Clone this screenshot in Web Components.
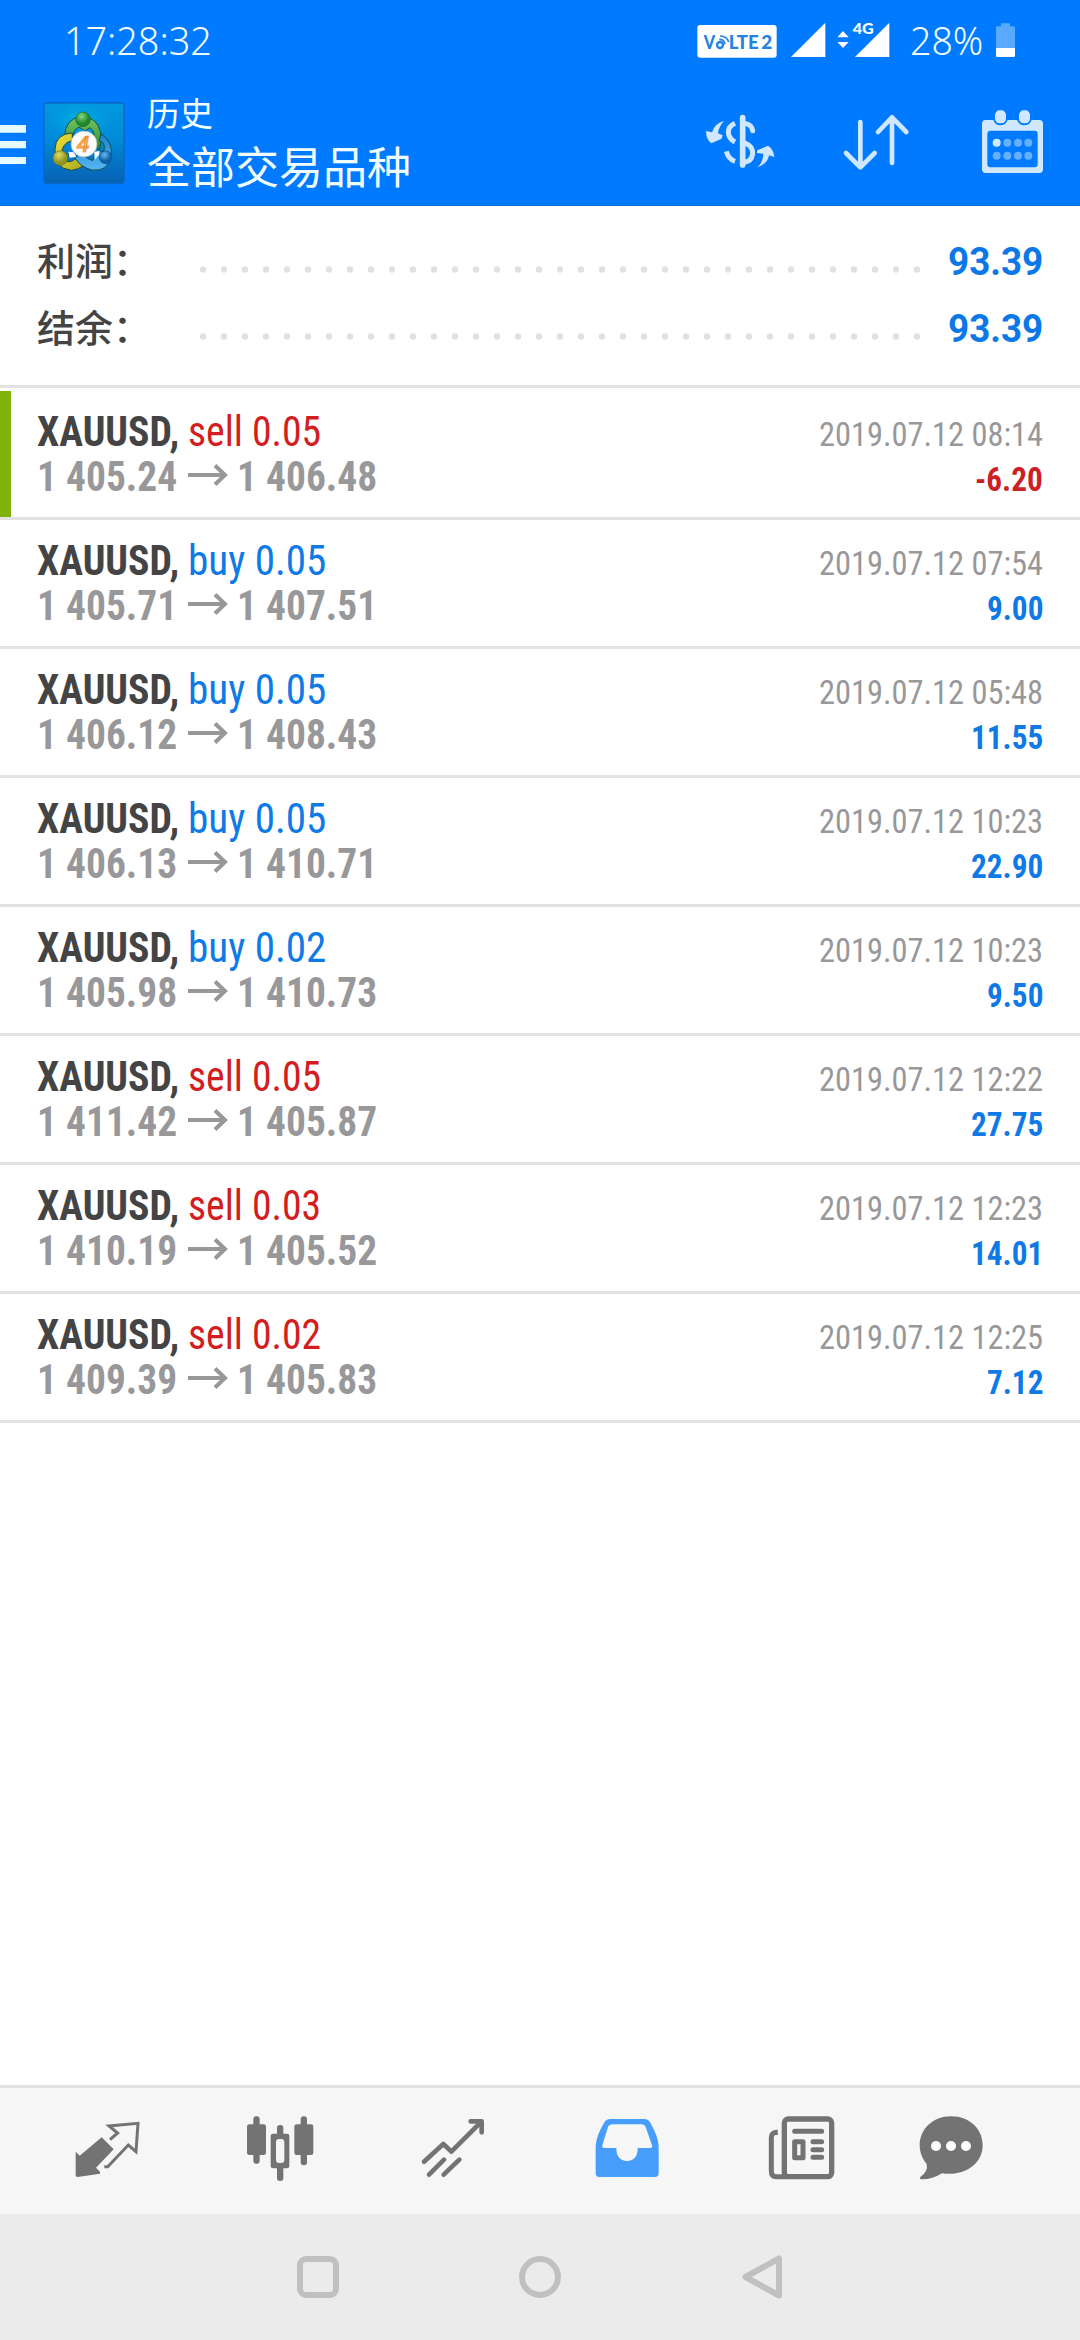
<!DOCTYPE html>
<html lang="zh-CN">
<head>
<meta charset="utf-8">
<title>历史</title>
<style>
html,body{margin:0;padding:0;background:#fff}
body{width:1080px;height:2340px;overflow:hidden;font-family:"Roboto","Noto Sans CJK SC",sans-serif}
</style>
</head>
<body>
<mt-app></mt-app>
<script>
/* Text squeezed horizontally so that the sample string takes a given width. */
class FitText extends HTMLElement{
  connectedCallback(){
    const r=this.attachShadow({mode:'open'});
    r.innerHTML=`<style>:host{display:block;white-space:nowrap;flex:none}span{display:inline-block;transform-origin:0 50%;white-space:pre}</style><span></span>`;
    const s=r.querySelector('span'),t=this.getAttribute('text');
    s.textContent=this.getAttribute('ref')||t;
    const k=parseFloat(this.getAttribute('w'))/s.offsetWidth;
    s.textContent=t;
    const w=s.getBoundingClientRect().width;
    s.style.transform=`scaleX(${k})`;
    this.style.width=w*k+'px';
  }
}
customElements.define('fit-text',FitText);

const define=(name,html)=>customElements.define(name,class extends HTMLElement{
  connectedCallback(){
    if(this.shadowRoot)return;
    this.attachShadow({mode:'open'}).innerHTML=typeof html==='function'?html(this):html;
  }
});

define('status-bar',`<style>
:host{display:flex;height:80px;box-sizing:border-box;padding:0 65px 0 64px;align-items:flex-start;color:#f2fcff;font-family:"Noto Sans","Open Sans",sans-serif;font-weight:350}
fit-text{font-size:38px;line-height:80px}
.sp{flex:1}svg{display:block;flex:none}
.b{margin-right:14px}.s{margin-right:19px}.p{margin-right:13px}
</style>
<fit-text text="17:28:32" w="148"></fit-text><div class="sp"></div>
<svg class="b" width="80" height="80" viewBox="54 0 240 240"><rect x="55" y="75" width="238" height="98" rx="9" fill="#fff"/>
<g fill="#2583df" font-family="Lato,sans-serif" font-weight="900" font-size="57"><text x="74" y="147" textLength="34" lengthAdjust="spacingAndGlyphs">V</text><text x="149" y="147" textLength="90" lengthAdjust="spacingAndGlyphs">LTE</text><text x="247" y="147" textLength="33" lengthAdjust="spacingAndGlyphs">2</text></g>
<g fill="none" stroke="#2583df"><circle cx="123" cy="135" r="9" stroke-width="7"/><path d="M121 118q15 0 17 15M123 108q22 1 26 18" stroke-width="5"/></g></svg>
<svg class="s" width="100" height="80" viewBox="336 0 300 240" fill="#fff"><path d="M336 171L439 68V171ZM528 171L631 68V171Z"/><path d="M475 112L492 93L509 112ZM475 126L492 144L509 126Z"/><path d="M516 62H588V103H516Z" fill="#007aff"/><text x="521" y="101" font-family="Lato" font-weight="900" font-size="45" textLength="63" lengthAdjust="spacingAndGlyphs">4G</text></svg>
<fit-text class="p" text="28%" w="73"></fit-text>
<svg width="19" height="80" viewBox="948 0 57 240"><path d="M952 79H963V70H990V79H1001Q1005 79 1005 83V145H948V83Q948 79 952 79Z" fill="#59a9ff"/><path d="M948 144H1005V167Q1005 171 1001 171H952Q948 171 948 167Z" fill="#fff"/></svg>`);

define('app-logo',`<style>:host{display:block;width:84px;height:84px}svg{display:block}</style>
<svg width="84" height="84" viewBox="127 61 252 252"><defs>
<linearGradient id="bg" x2="0" y2="1"><stop stop-color="#0298df"/><stop offset=".45" stop-color="#008bd9"/><stop offset="1" stop-color="#0861b3"/></linearGradient>
<radialGradient id="glow"><stop stop-color="#00b5e5"/><stop offset="1" stop-color="#00a0e0" stop-opacity="0"/></radialGradient>
<linearGradient id="g" x2="0" y2="1"><stop stop-color="#78c665"/><stop offset="1" stop-color="#238b31"/></linearGradient>
<linearGradient id="y" x2="1" y2="1"><stop stop-color="#f0df39"/><stop offset="1" stop-color="#a9aa20"/></linearGradient>
<linearGradient id="b" x2="0" y2="1"><stop stop-color="#1684cc"/><stop offset="1" stop-color="#57b7f3"/></linearGradient>
<radialGradient id="gb" cx=".4" cy=".3"><stop stop-color="#8bd87c"/><stop offset="1" stop-color="#20852f"/></radialGradient>
<radialGradient id="yb" cx=".4" cy=".3"><stop stop-color="#e2db67"/><stop offset="1" stop-color="#8f9720"/></radialGradient>
<radialGradient id="bb" cx=".4" cy=".3"><stop stop-color="#67baf0"/><stop offset="1" stop-color="#0b60a9"/></radialGradient></defs>
<rect x="130" y="64" width="246" height="247" rx="13" fill="#0868c8"/><rect x="135" y="69" width="236" height="237" rx="8" fill="url(#bg)"/><ellipse cx="240" cy="120" rx="100" ry="60" fill="url(#glow)"/>
<g stroke="#174c45" stroke-width="3">
<path d="M244 107Q195 116 195 168L218 180Q218 148 238 139L256 151L270 141Q292 154 278 188L299 208Q307 184 303 155Q294 112 249 107Z" fill="url(#g)"/>
<path d="M218 157Q168 159 166 205Q162 264 216 269Q237 267 254 253L243 229L225 236Q213 248 195 240L209 222Q188 220 188 206Q195 184 218 180Z" fill="url(#y)"/>
<path d="M304 159Q344 188 333 228Q325 274 276 268Q245 260 226 233L246 215Q262 236 279 240L290 216L313 211Q318 184 299 180Z" fill="url(#b)"/>
</g>
<path d="M206 213l16 2 8 14-20 2ZM284 213l16-2-3 13-12 13Z" fill="#fff"/>
<circle cx="250" cy="116" r="22" fill="url(#gb)" stroke="#136c2b" stroke-width="2"/><circle cx="182" cy="232" r="22" fill="url(#yb)" stroke="#6c7620" stroke-width="2"/><circle cx="318" cy="230" r="19" fill="url(#bb)" stroke="#07569b" stroke-width="2"/>
<circle cx="253" cy="190" r="39" fill="#fcfcfc" stroke="#aab4ba" stroke-width="2"/><text x="231" y="214" font-family="Roboto" font-weight="500" font-style="italic" font-size="66" textLength="38" lengthAdjust="spacingAndGlyphs" fill="#ffb35e" stroke="#e9861c" stroke-width="2">4</text>
</svg>`);

define('app-header',`<style>
:host{display:flex;height:126px;align-items:flex-start;color:#f1fcff;border-bottom:1px solid #0b6fd4;box-sizing:border-box}
svg{display:block;flex:none}app-logo{margin:21px 21px 0 16px;flex:none}
.t{flex:1;font-family:"Noto Sans CJK SC",sans-serif;padding-top:15px}
.a{font-size:33px;line-height:34px}.b{font-size:44px;line-height:46px;margin-top:13px;white-space:nowrap}
</style>
<svg width="26" height="120" viewBox="0 0 78 360" fill="#e6fbff"><path d="M0 135H78V158H0ZM0 183H78V205H0ZM0 231H78V252H0Z"/></svg>
<app-logo></app-logo>
<div class="t"><div class="a">历史</div><div class="b">全部交易品种</div></div>
<svg width="400" height="125" viewBox="0 240 1200 375" fill="none" stroke="#cfe7ff" stroke-linecap="round" stroke-linejoin="round">
<g stroke-width="15"><path d="M188 353V495" stroke-width="17"/><path d="M195 370Q216 374 218 392"/><path d="M195 429Q219 438 218 462Q214 484 195 486"/><path d="M165 370Q145 380 145 395Q145 415 165 426M165 484Q145 477 139 454" stroke-linecap="butt"/></g>
<path d="M132 363Q105 369 96 397L78 393Q78 419 94 430L125 416L128 406L114 400Q115 382 132 363ZM231 502Q249 489 250 461L230 459L232 451L264 437Q281 447 283 471L267 466Q264 491 231 502Z" fill="#cfe7ff" stroke="none"/>
<path d="M541 366V502M498 459L541 502L584 459M636 489V352M594 396L636 352L679 396" stroke-width="14"/>
<path fill="#cfe7ff" stroke="none" fill-rule="evenodd" d="M917 360H940Q945 376 961 376Q977 376 983 360H1011Q1017 376 1033 376Q1049 376 1055 360H1078Q1089 360 1089 371V508Q1089 519 1078 519H917Q906 519 906 508V371Q906 360 917 360ZM932 392Q922 392 922 402V492Q922 502 932 502H1063Q1073 502 1073 492V402Q1073 392 1063 392Z"/>
<g fill="#cfe7ff" stroke="none"><rect x="945" y="331" width="33" height="39" rx="14"/><rect x="1017" y="331" width="33" height="39" rx="14"/><circle cx="950" cy="428" r="12"/><g fill="#65afff"><circle cx="982" cy="428" r="12"/><circle cx="1014" cy="428" r="12"/><circle cx="1045" cy="428" r="12"/><circle cx="950" cy="467" r="12"/><circle cx="982" cy="467" r="12"/><circle cx="1014" cy="467" r="12"/><circle cx="1045" cy="467" r="12"/></g></g>
</svg>`);

define('summary-row',h=>`<style>
:host{display:flex;height:67px;align-items:flex-start;padding:0 37px}
.l{font:500 38px/61px "Noto Sans CJK SC",sans-serif;color:#444;width:163px;white-space:nowrap;flex:none}
svg{display:block;flex:none}fit-text{font:700 38px/69px Roboto;color:#0b78e8;margin-left:auto}
</style><div class="l">${h.getAttribute('label')}</div>
<svg width="724" height="67">${Array.from({length:35},(_,i)=>`<circle cx="${3+i*21}" cy="41.5" r="3.2" fill="#e1e1e1"/>`).join('')}</svg>
<fit-text text="${h.getAttribute('value')}" w="95"></fit-text>`);

define('deal-row',h=>{const[k,v,a,b,d,p,sel]=h.getAttribute('data').split('|');return`<style>
:host{display:flex;justify-content:space-between;height:129px;box-sizing:border-box;border-bottom:3px solid ${sel?'transparent':'#e2e2e2'};${sel?'background:linear-gradient(#e2e2e2,#e2e2e2) 0 126px/100% 3px no-repeat border-box,linear-gradient(#7fb20b,#7fb20b) 0 0/11px 126px no-repeat border-box;':''}padding:18px 37px 0 37px;font-family:"Roboto Condensed",Roboto,sans-serif;font-stretch:75%}
.n,.q{display:flex;font-size:42px;line-height:46px;height:45px}
.n{color:#444;font-weight:700}.n fit-text+fit-text{margin-left:9px;font-weight:400;color:${k==='sell'?'#d31d20':'#0f7ae5'}}
.q{color:#98989a;font-weight:700}svg{display:block;margin:0 9px 0 10px;flex:none}
.r{display:flex;flex-direction:column;align-items:flex-end;font-size:34px;line-height:46px;padding-top:2px}
.r fit-text{height:45px;color:#98989a}.r fit-text+fit-text{font-weight:700;color:${p[0]==='-'?'#cd1f26':'#0f7ae5'}}
</style>
<div><div class="n"><fit-text text="XAUUSD," w="142"></fit-text><fit-text text="${k} ${v}" w="${k==='sell'?133:138}" ref="${k} 0.05"></fit-text></div>
<div class="q"><fit-text text="${a}" w="140" ref="1 406.48"></fit-text><svg width="41" height="45" fill="none" stroke="#98989a" stroke-width="4"><path d="M1 21H39M28 11.500L38 21L28 30.500"/></svg><fit-text text="${b}" w="140" ref="1 406.48"></fit-text></div></div>
<div class="r"><fit-text text="${d}" ref="2019.07.12 08:14" w="224"></fit-text><fit-text text="${p}" ref="-6.20" w="68"></fit-text></div>`});

define('tab-bar',`<style>
:host{display:flex;height:129px;box-sizing:border-box;border-top:3px solid #e2e2e2;background:#f6f6f6;padding-left:20px}svg{display:block;flex:none}
</style>
<svg width="174" height="126" viewBox="-60 54 522 378"><path d="M107 245L119 257L185 202L221 238L168 293L180 305V311L113 321Q107 321 107 315Z" fill="#737373"/><path d="M210 209L233 189L207 168L294 160L288 245L265 225L203 290H193" fill="none" stroke="#737373" stroke-width="9"/></svg>
<svg width="174" height="126" viewBox="462 54 522 378" fill="#737373"><rect x="640" y="139" width="19" height="142" rx="9"/><rect x="621" y="163" width="57" height="92" rx="7"/><rect x="782" y="139" width="19" height="147" rx="9"/><rect x="763" y="163" width="57" height="92" rx="7"/><rect x="711" y="165" width="19" height="168" rx="9"/><rect x="692" y="191" width="56" height="104" rx="7"/><rect x="708" y="207" width="25" height="72" rx="9" fill="#f6f6f6"/></svg>
<svg width="174" height="126" viewBox="984 54 522 378" fill="none" stroke="#737373" stroke-width="14" stroke-linecap="round" stroke-linejoin="round"><path d="M1152 275L1210 222L1234 245L1322 157M1167 314L1212 269M1211 314L1258 269"/><path d="M1292 154H1325V187"/></svg>
<svg width="174" height="126" viewBox="-54 54 522 378"><path fill="#469dfc" fill-rule="evenodd" d="M152 147H252Q264 147 270 157Q294 198 296 227V310Q296 321 285 321H118Q107 321 107 310V227Q109 198 133 157Q139 147 152 147ZM158 163Q147 163 144 171L127 226Q125 234 134 234H169Q169 272 201 273Q233 272 233 234H269Q279 234 276 226L257 171Q254 163 243 163Z"/></svg>
<svg width="174" height="126" viewBox="468 54 522 378" fill="none" stroke="#737373"><rect x="673" y="147" width="142" height="173" rx="12" stroke-width="16"/><path d="M653 187Q634 186 634 203V303Q634 320 648 320H680" stroke-width="15"/><path d="M653 188V195H644" stroke="none" fill="#737373"/><path d="M704 184H785M759 215H785M759 239H785M759 262H785" stroke-width="15" stroke-linecap="round"/><rect x="704" y="215" width="25" height="48" stroke-width="15" stroke-linejoin="round"/></svg>
<svg width="122" height="126" viewBox="990 54 366 378"><path fill="#737373" d="M1173 139C1230 139 1268 178 1268 226C1268 282 1214 320 1146 310Q1116 329 1084 328Q1078 328 1081 321Q1105 304 1100 282C1089 269 1079 249 1079 226C1079 178 1118 139 1173 139Z"/><g fill="#fff"><circle cx="1128" cy="228" r="15"/><circle cx="1173" cy="228" r="15"/><circle cx="1218" cy="228" r="15"/></g></svg>`);

define('nav-bar',`<style>:host{display:flex;justify-content:center;gap:180px;height:126px;background:#ebebeb}svg{display:block}</style>
<svg width="42" height="126" viewBox="0 2214 42 126"><rect x="3" y="2259" width="36" height="36" rx="6" fill="none" stroke="#c0c0c0" stroke-width="6"/></svg>
<svg width="42" height="126" viewBox="0 2214 42 126"><circle cx="21" cy="2277" r="18" fill="none" stroke="#c0c0c0" stroke-width="6"/></svg>
<svg width="42" height="126" viewBox="741 2214 42 126"><path d="M745.500 2277L779 2258.500V2295.500Z" fill="none" stroke="#c0c0c0" stroke-width="6" stroke-linejoin="round"/></svg>`);

const deals=['sell|0.05|1 405.24|1 406.48|2019.07.12 08:14|-6.20|1','buy|0.05|1 405.71|1 407.51|2019.07.12 07:54|9.00','buy|0.05|1 406.12|1 408.43|2019.07.12 05:48|11.55','buy|0.05|1 406.13|1 410.71|2019.07.12 10:23|22.90','buy|0.02|1 405.98|1 410.73|2019.07.12 10:23|9.50','sell|0.05|1 411.42|1 405.87|2019.07.12 12:22|27.75','sell|0.03|1 410.19|1 405.52|2019.07.12 12:23|14.01','sell|0.02|1 409.39|1 405.83|2019.07.12 12:25|7.12'];
define('mt-app',`<style>
:host{display:flex;flex-direction:column;width:1080px;height:2340px;background:#fff}
.top{background:#007aff;flex:none}
.sum{height:182px;box-sizing:border-box;padding-top:22px;border-bottom:3px solid #e2e2e2;margin-bottom:3px;flex:none}
.list{flex:1}
</style>
<div class="top"><status-bar></status-bar><app-header></app-header></div>
<div class="sum"><summary-row label="利润：" value="93.39"></summary-row><summary-row label="结余：" value="93.39"></summary-row></div>
<div class="list">${deals.map(d=>`<deal-row data="${d}"></deal-row>`).join('')}</div>
<tab-bar></tab-bar><nav-bar></nav-bar>`);
</script>
</body>
</html>
